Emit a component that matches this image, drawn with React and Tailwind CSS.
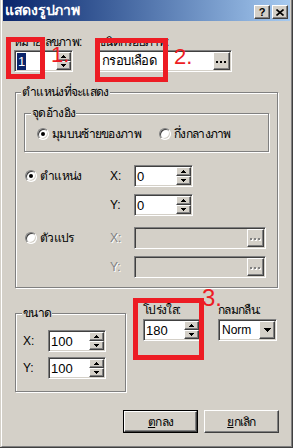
import React from "react";

const SUNKEN =
  "border border-t-[#808080] border-l-[#808080] border-r-white border-b-white shadow-[inset_1px_1px_0_#404040,inset_-1px_-1px_0_#d4d0c8]";
const RAISED =
  "border border-t-white border-l-white border-r-[#404040] border-b-[#404040] shadow-[inset_-1px_-1px_0_#808080] bg-[#d4d0c8]";
const ETCHED =
  "border border-[#808080] shadow-[inset_1px_1px_0_#ffffff,1px_1px_0_#ffffff]";
const TH = "text-[12px] tracking-[-0.7px] whitespace-nowrap";

function Arrow({ up, color = "#000" }) {
  return (
    <svg width="5" height="3" viewBox="0 0 5 3" shapeRendering="crispEdges">
      {up ? (
        <>
          <rect x="2" y="0" width="1" height="1" fill={color} />
          <rect x="1" y="1" width="3" height="1" fill={color} />
          <rect x="0" y="2" width="5" height="1" fill={color} />
        </>
      ) : (
        <>
          <rect x="0" y="0" width="5" height="1" fill={color} />
          <rect x="1" y="1" width="3" height="1" fill={color} />
          <rect x="2" y="2" width="1" height="1" fill={color} />
        </>
      )}
    </svg>
  );
}

function Dots({ disabled }) {
  const c = disabled ? "#808080" : "#000";
  return (
    <svg width="11" height="3" viewBox="0 0 11 3" shapeRendering="crispEdges">
      {disabled && (
        <>
          <rect x="1" y="1" width="2" height="2" fill="#fff" />
          <rect x="5" y="1" width="2" height="2" fill="#fff" />
          <rect x="9" y="1" width="2" height="2" fill="#fff" />
        </>
      )}
      <rect x="0" y="0" width="2" height="2" fill={c} />
      <rect x="4" y="0" width="2" height="2" fill={c} />
      <rect x="8" y="0" width="2" height="2" fill={c} />
    </svg>
  );
}

function SpinBox({ value, className = "", selected }) {
  return (
    <div className={`${SUNKEN} bg-white flex h-[22px] p-[1px] ${className}`}>
      <div className="flex-1 flex items-center pl-[1px] text-[13px] leading-none font-['Liberation_Sans',sans-serif]">
        {selected ? (
          <span className="bg-[#0a246a] text-white px-[1px] py-[2px]">{value}</span>
        ) : (
          <span>{value}</span>
        )}
      </div>
      <div className="w-[15px] flex flex-col">
        <div className={`${RAISED} flex-1 flex items-center justify-center`}>
          <Arrow up />
        </div>
        <div className={`${RAISED} flex-1 flex items-center justify-center`}>
          <Arrow />
        </div>
      </div>
    </div>
  );
}

function BrowseEdit({ value, className = "", disabled }) {
  return (
    <div
      className={`${SUNKEN} ${disabled ? "bg-[#d4d0c8]" : "bg-white"} flex h-[22px] p-[1px] ${className}`}
    >
      <div className="flex-1 flex items-center pl-[2px] text-[13px] tracking-[-0.6px] whitespace-nowrap">
        {value}
      </div>
      <div className={`${RAISED} w-[17px] flex items-end justify-center pb-[5px]`}>
        <Dots disabled={disabled} />
      </div>
    </div>
  );
}

function Radio({ checked }) {
  return (
    <div className="w-[12px] h-[12px] rounded-full bg-white border border-t-[#808080] border-l-[#808080] border-r-white border-b-white shadow-[inset_1px_1px_0_#404040,inset_-1px_-1px_0_#d4d0c8] flex items-center justify-center shrink-0">
      {checked && <div className="w-[4px] h-[4px] rounded-full bg-black" />}
    </div>
  );
}

function GroupTitle({ children, className = "" }) {
  return (
    <div
      className={`absolute -top-[8px] bg-[#d4d0c8] px-[1px] leading-[14px] ${TH} ${className}`}
    >
      {children}
    </div>
  );
}

function DisabledLabel({ children }) {
  return (
    <span className="text-[#808080] [text-shadow:1px_1px_0_#ffffff]">{children}</span>
  );
}

export default function App() {
  return (
    <div className="w-[293px] h-[448px] bg-[#d4d0c8] relative overflow-hidden border-r border-b border-r-[#404040] border-b-[#404040] font-['Liberation_Sans','Noto_Sans',sans-serif] text-black text-[12px]">
      <div className="h-full ml-[1px] px-[1px] pb-[1px] border-l border-r border-b border-l-white border-r-[#808080] border-b-[#808080] flex flex-col">
        {/* Title bar */}
        <div className="h-[21px] shrink-0 bg-gradient-to-r from-[#0a246a] to-[#a6caf0] flex items-start justify-between pl-[2px] pr-[2px]">
          <div className="text-white font-bold text-[14px] tracking-[-0.3px] leading-[21px] whitespace-nowrap">
            แสดงรูปภาพ
          </div>
          <div className="flex gap-[2px] mt-[5px]">
            <div className={`${RAISED} w-[16px] h-[14px] flex items-center justify-center text-[11px] font-bold leading-none`}>
              ?
            </div>
            <div className={`${RAISED} w-[16px] h-[14px] flex items-center justify-center`}>
              <svg width="8" height="7" viewBox="0 0 8 7">
                <path d="M0.5 0.5 L7.5 6.5 M7.5 0.5 L0.5 6.5" stroke="#000" strokeWidth="1.6" />
              </svg>
            </div>
          </div>
        </div>

        {/* Row 1 */}
        <div className="flex mt-[15px] pl-[11px]">
          <div className="w-[59px] flex flex-col">
            <div className={`h-[12px] leading-[12px] ${TH}`}>หมายเลขภาพ:</div>
            <SpinBox value="1" selected className="mt-[2px] w-[59px]" />
          </div>
          <div className="ml-[25px] w-[134px] flex flex-col">
            <div className={`h-[12px] leading-[12px] ${TH}`}>ชนิดกรอบภาพ:</div>
            <BrowseEdit value="กรอบเลือด" className="mt-[2px] w-[134px]" />
          </div>
        </div>

        {/* Group: position */}
        <div className={`${ETCHED} relative mt-[20px] ml-[12px] w-[263px] h-[196px] shrink-0`}>
          <GroupTitle className="left-[5px]">ตำแหน่งที่จะแสดง</GroupTitle>

          <div className={`${ETCHED} relative mt-[20px] ml-[8px] w-[245px] h-[39px]`}>
            <GroupTitle className="left-[6px]">จุดอ้างอิง</GroupTitle>
            <div className="flex items-center h-full pl-[12px] pt-[3px]">
              <div className="w-[122px] flex items-center gap-[3px]">
                <Radio checked />
                <span className={TH}>มุมบนซ้ายของภาพ</span>
              </div>
              <div className="flex items-center gap-[3px]">
                <Radio />
                <span className={TH}>กึ่งกลางภาพ</span>
              </div>
            </div>
          </div>

          <div className="mt-[13px] pl-[9px] flex flex-col">
            <div className="flex items-center h-[22px]">
              <div className="w-[85px] flex items-center gap-[3px]">
                <Radio checked />
                <span className={TH}>ตำแหน่ง</span>
              </div>
              <div className="w-[24px]">X:</div>
              <SpinBox value="0" className="w-[59px]" />
            </div>
            <div className="flex items-center h-[22px] mt-[7px]">
              <div className="w-[85px]" />
              <div className="w-[24px]">Y:</div>
              <SpinBox value="0" className="w-[59px]" />
            </div>
            <div className="flex items-center h-[22px] mt-[11px]">
              <div className="w-[85px] flex items-center gap-[3px]">
                <Radio />
                <span className={TH}>ตัวแปร</span>
              </div>
              <div className="w-[24px]">
                <DisabledLabel>X:</DisabledLabel>
              </div>
              <BrowseEdit value="" disabled className="w-[132px]" />
            </div>
            <div className="flex items-center h-[22px] mt-[7px]">
              <div className="w-[85px]" />
              <div className="w-[24px]">
                <DisabledLabel>Y:</DisabledLabel>
              </div>
              <BrowseEdit value="" disabled className="w-[132px]" />
            </div>
          </div>
        </div>

        {/* Row 2 */}
        <div className="flex items-start">
          <div className={`${ETCHED} relative mt-[25px] ml-[12px] w-[111px] h-[79px] shrink-0`}>
            <GroupTitle className="left-[6px]">ขนาด</GroupTitle>
            <div className="mt-[16px] pl-[7px] flex flex-col">
              <div className="flex items-center h-[22px]">
                <div className="w-[25px]">X:</div>
                <SpinBox value="100" className="w-[58px]" />
              </div>
              <div className="flex items-center h-[22px] mt-[5px]">
                <div className="w-[25px]">Y:</div>
                <SpinBox value="100" className="w-[58px]" />
              </div>
            </div>
          </div>
          <div className="ml-[17px] mt-[16px] flex flex-col">
            <div className={`h-[13px] leading-[13px] ${TH}`}>โปร่งใส:</div>
            <SpinBox value="180" className="mt-[2px] w-[58px]" />
          </div>
          <div className="ml-[17px] mt-[16px] flex flex-col">
            <div className={`h-[13px] leading-[13px] ${TH}`}>กลมกลืน:</div>
            <div className={`${SUNKEN} bg-white flex h-[22px] p-[1px] mt-[2px] w-[59px]`}>
              <div className="flex-1 flex items-center pl-[2px] text-[12px]">Norm</div>
              <div className={`${RAISED} w-[16px] flex items-center justify-center`}>
                <svg width="7" height="4" viewBox="0 0 7 4" shapeRendering="crispEdges">
                  <rect x="0" y="0" width="7" height="1" fill="#000" />
                  <rect x="1" y="1" width="5" height="1" fill="#000" />
                  <rect x="2" y="2" width="3" height="1" fill="#000" />
                  <rect x="3" y="3" width="1" height="1" fill="#000" />
                </svg>
              </div>
            </div>
          </div>
        </div>

        {/* Buttons */}
        <div className="flex justify-end gap-[6px] pr-[11px] mt-[18px]">
          <div className="w-[75px] h-[23px] border border-black">
            <div className={`${RAISED} w-full h-full flex items-center justify-center`}>
              <span className={TH}>
                <u>ต</u>กลง
              </span>
            </div>
          </div>
          <div className={`${RAISED} w-[75px] h-[23px] flex items-center justify-center`}>
            <span className={TH}>
              <u>ย</u>กเลิก
            </span>
          </div>
        </div>
      </div>

      {/* Red annotations */}
      <div className="absolute left-[6px] top-[37px] w-[39px] h-[42px] border-[5px] border-[#ed1c24]" />
      <div className="absolute left-[95px] top-[38px] w-[73px] h-[44px] border-[5px] border-[#ed1c24]" />
      <div className="absolute left-[133px] top-[298px] w-[71px] h-[62px] border-[5px] border-[#ed1c24]" />
      <div className="absolute left-[51px] top-[48px] text-[22px] leading-[14px] text-[#ed1c24] font-['Liberation_Sans',sans-serif]">
        1.
      </div>
      <div className="absolute left-[174px] top-[50px] text-[22px] leading-[14px] text-[#ed1c24] font-['Liberation_Sans',sans-serif]">
        2.
      </div>
      <div className="absolute left-[202px] top-[290px] text-[24px] leading-[16px] text-[#ed1c24] font-['Liberation_Sans',sans-serif]">
        3.
      </div>
    </div>
  );
}
